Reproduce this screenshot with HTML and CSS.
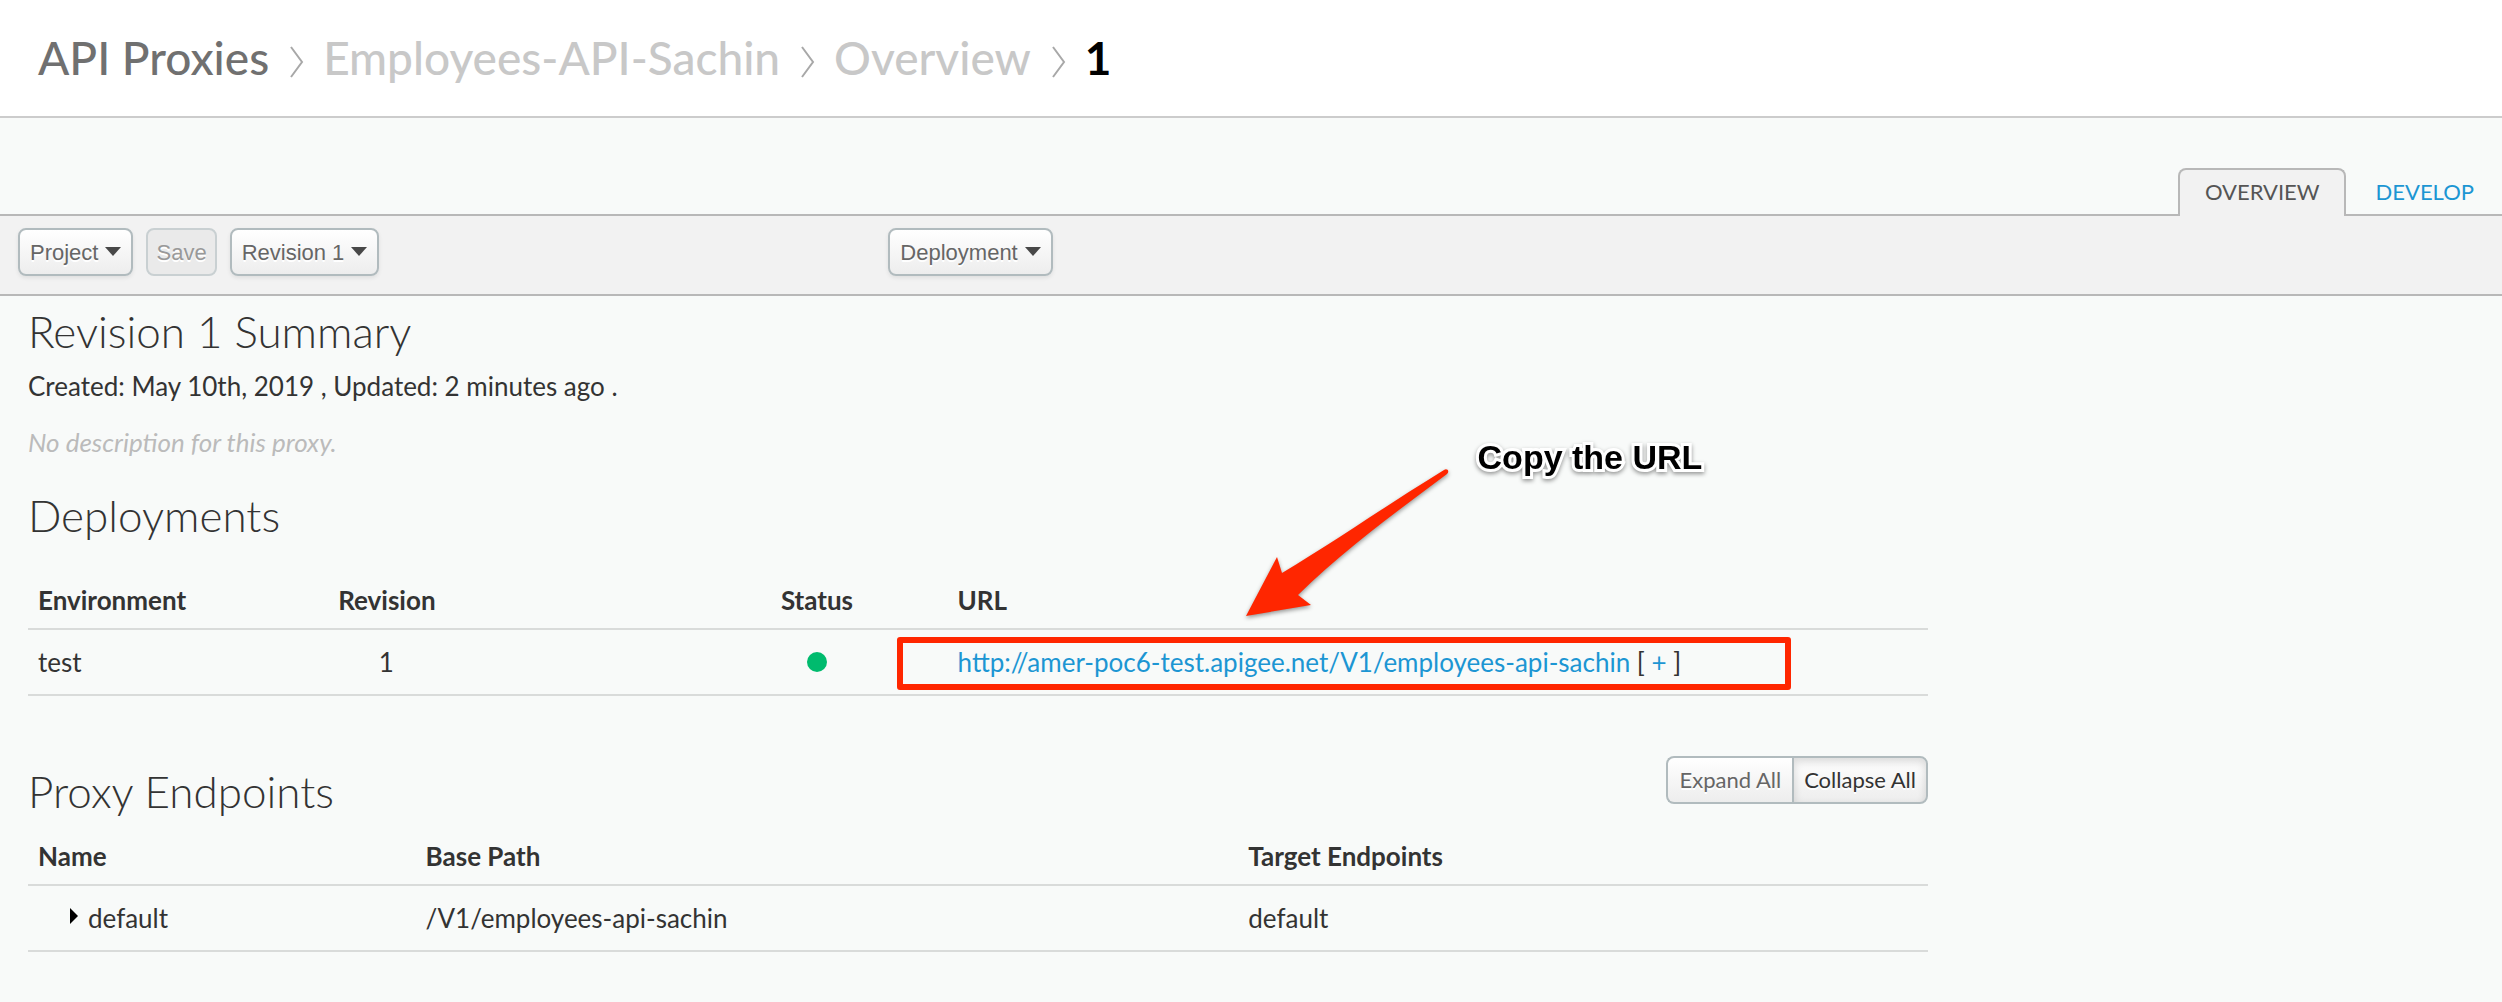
FILE: index.html
```html
<!DOCTYPE html>
<html lang="en">
<head>
<meta charset="utf-8">
<meta name="viewport" content="width=device-width, initial-scale=1">
<title>Employees-API-Sachin - Revision 1</title>
<link rel="stylesheet" href="styles.css">
</head>
<body>
<header class="header">
  <nav class="crumbs" aria-label="Breadcrumb">
    <a class="crumb crumb-root" href="#proxies">API Proxies</a>
    <svg class="crumb-sep" viewBox="0 0 14 32" aria-hidden="true"><path d="M1 1 12 16 1 31"/></svg>
    <a class="crumb" href="#proxy">Employees-API-Sachin</a>
    <svg class="crumb-sep" viewBox="0 0 14 32" aria-hidden="true"><path d="M1 1 12 16 1 31"/></svg>
    <a class="crumb" href="#overview">Overview</a>
    <svg class="crumb-sep" viewBox="0 0 14 32" aria-hidden="true"><path d="M1 1 12 16 1 31"/></svg>
    <span class="crumb crumb-current">1</span>
  </nav>
</header>

<nav class="tabs" aria-label="Views">
  <a class="tab tab-active" href="#overview">OVERVIEW</a>
  <a class="tab" href="#develop">DEVELOP</a>
</nav>

<div class="toolbar">
  <div class="toolbar-group">
    <button class="btn" type="button">Project<span class="caret"></span></button>
    <button class="btn" type="button" disabled>Save</button>
    <button class="btn" type="button">Revision 1<span class="caret"></span></button>
  </div>
  <div class="toolbar-group">
    <button class="btn" type="button">Deployment<span class="caret"></span></button>
  </div>
</div>

<main class="content">
  <section>
    <h1 class="title">Revision 1 Summary</h1>
    <p class="meta">Created: May 10th, 2019 , Updated: 2 minutes ago .</p>
    <p class="description">No description for this proxy.</p>
  </section>

  <section class="deployments">
    <h2 class="title">Deployments</h2>
    <table class="grid">
      <colgroup><col class="col-env"><col class="col-rev"><col class="col-status"><col></colgroup>
      <thead>
        <tr><th>Environment</th><th>Revision</th><th>Status</th><th>URL</th></tr>
      </thead>
      <tbody>
        <tr>
          <td>test</td>
          <td><span class="mark mark-rev">1</span></td>
          <td><span class="mark mark-status"><span class="dot" role="img" aria-label="Deployed"></span></span></td>
          <td class="url-cell">
            <a class="link" href="#url">http://amer-poc6-test.apigee.net/V1/employees-api-sachin</a> [ <a class="link" href="#more">+</a> ]
            <div class="highlight"></div>
            <svg class="arrow" viewBox="0 0 212 158" aria-hidden="true"><path d="M3 150 34 91 39 107C91 76 147 37 201 4 204 2 207 5 204 8 153 46 102 83 55 129L68 139Z"/></svg>
            <strong class="callout">Copy the URL</strong>
          </td>
        </tr>
      </tbody>
    </table>
  </section>

  <section class="endpoints">
    <div class="section-head">
      <h2 class="title">Proxy Endpoints</h2>
      <div class="btn-group">
        <button class="btn btn-lato" type="button">Expand All</button>
        <button class="btn btn-lato btn-pressed" type="button" aria-pressed="true">Collapse All</button>
      </div>
    </div>
    <table class="grid">
      <colgroup><col class="col-name"><col class="col-path"><col></colgroup>
      <thead>
        <tr><th>Name</th><th>Base Path</th><th>Target Endpoints</th></tr>
      </thead>
      <tbody>
        <tr>
          <td><span class="expander"></span>default</td>
          <td>/V1/employees-api-sachin</td>
          <td>default</td>
        </tr>
      </tbody>
    </table>
  </section>
</main>
</body>
</html>
```
FILE: styles.css
```css
* {
  box-sizing: border-box;
}

body {
  margin: 0;
  background: #f8faf9;
  color: #333;
  font-family: Lato, "Open Sans", sans-serif;
  font-size: 26px;
  line-height: 36px;
}

a {
  text-decoration: none;
}

/* Breadcrumb header */
.header {
  padding: 32px 38px;
  background: #fff;
  border-bottom: 2px solid #ccc;
}

.crumbs {
  display: flex;
  align-items: center;
  line-height: 52px;
}

.crumb {
  color: #c8c8c8;
  font-size: 46px;
  font-weight: 500;
}

.crumb-root {
  color: #707070;
}

.crumb-current {
  color: #000;
  font-weight: 700;
}

.crumb-sep {
  width: 14px;
  height: 32px;
  margin: 8px 19px 0 21px;
  fill: none;
  stroke: #a8a8a8;
  stroke-width: 2;
}

/* Tabs */
.tabs {
  display: flex;
  justify-content: flex-end;
  margin-bottom: -2px;
  padding: 50px 0 0;
}

.tab {
  height: 48px;
  padding: 6px 28px 6px 30px;
  color: #1c96d3;
  font-size: 22px;
}

.tab-active {
  position: relative;
  padding: 4px 24px 4px 25px;
  background: #f2f2f2;
  border: 2px solid #b8b8b8;
  border-bottom: 0;
  border-radius: 8px 8px 0 0;
  color: #555;
}

/* Toolbar */
.toolbar {
  display: grid;
  grid-template-columns: 6fr 11fr;
  padding: 12px 18px 18px;
  background: #f2f2f2;
  border: solid #b8b8b8;
  border-width: 2px 0;
}

.toolbar-group {
  display: flex;
  gap: 13px;
}

.btn {
  height: 48px;
  padding: 2px 10px 0;
  background: linear-gradient(#fff, #ededed);
  border: 2px solid #b1bbbe;
  border-radius: 8px;
  box-shadow: 0 2px 4px rgba(0, 0, 0, 0.08);
  color: #666;
  font: 22px/42px "Liberation Sans", Arial, sans-serif;
  text-shadow: 0 2px 0 #fff;
}

.btn:disabled {
  padding: 2px 8px 0;
  background: #eaeaea;
  border-color: #c9d0d2;
  box-shadow: none;
  color: #999;
}

.caret {
  display: inline-block;
  margin-left: 7px;
  border: solid transparent;
  border-width: 9px 8px 0;
  border-top-color: #484848;
  vertical-align: 4px;
}

/* Content */
.content {
  max-width: 1956px;
  padding: 9px 28px 50px;
}

.title {
  margin: 0;
  font-size: 44px;
  font-weight: 300;
  line-height: 52px;
}

.meta,
.description {
  margin: 11px 0 0;
}

.description {
  margin-top: 20px;
  color: #bbb;
  font-style: italic;
}

.deployments {
  margin-top: 29px;
}

.grid {
  width: 100%;
  border-collapse: collapse;
  table-layout: fixed;
}

.deployments .grid {
  margin-top: 31px;
}

.endpoints .grid {
  margin-top: 11px;
}

.grid th,
.grid td {
  padding: 14px 10px;
  border-bottom: 2px solid #d9dbda;
  text-align: left;
}

.grid th {
  padding: 10px;
}

.col-env {
  width: 15.8%;
}

.col-rev {
  width: 23.3%;
}

.col-status {
  width: 9.3%;
}

.col-name {
  width: 20.4%;
}

.col-path {
  width: 43.3%;
}

.mark {
  display: inline-flex;
  align-items: center;
  justify-content: center;
  height: 36px;
  vertical-align: top;
}

.mark-rev {
  width: 96px;
}

.mark-status {
  width: 72px;
}

.dot {
  width: 20px;
  height: 20px;
  border-radius: 50%;
  background: #00bb6e;
}

.link {
  color: #1c96d3;
}

/* Annotations over the URL cell */
.url-cell {
  position: relative;
}

.highlight {
  position: absolute;
  top: 7px;
  left: -51px;
  width: 894px;
  height: 53px;
  border: 6px solid #ff2600;
  border-radius: 3px;
  pointer-events: none;
}

.arrow {
  position: absolute;
  top: -164px;
  left: 295px;
  width: 212px;
  height: 158px;
  fill: #ff2600;
  filter: drop-shadow(0 2px 2px rgba(0, 0, 0, 0.4));
}

.callout {
  position: absolute;
  top: -193px;
  left: 530px;
  color: #000;
  font: bold 34px/40px "Liberation Sans", Arial, sans-serif;
  white-space: nowrap;
  -webkit-text-stroke: 6px #fff;
  paint-order: stroke fill;
  filter: drop-shadow(0 2px 2px rgba(0, 0, 0, 0.4));
}

/* Endpoints */
.endpoints {
  margin-top: 60px;
}

.section-head {
  display: flex;
  align-items: flex-start;
  justify-content: space-between;
}

.section-head .title {
  padding-top: 9px;
}

.btn-group {
  display: flex;
}

.btn-lato {
  padding: 0 11px;
  border-right-width: 0;
  border-radius: 8px 0 0 8px;
  box-shadow: none;
  font-family: Lato, "Open Sans", sans-serif;
}

.btn-pressed {
  padding: 0 10px;
  border-right-width: 2px;
  border-radius: 0 8px 8px 0;
  box-shadow: inset 0 4px 8px rgba(0, 0, 0, 0.15);
  color: #333;
}

.expander {
  display: inline-block;
  margin: 0 10px 0 32px;
  border: solid transparent;
  border-width: 8px 0 8px 8px;
  border-left-color: #000;
  vertical-align: 4px;
}
```
